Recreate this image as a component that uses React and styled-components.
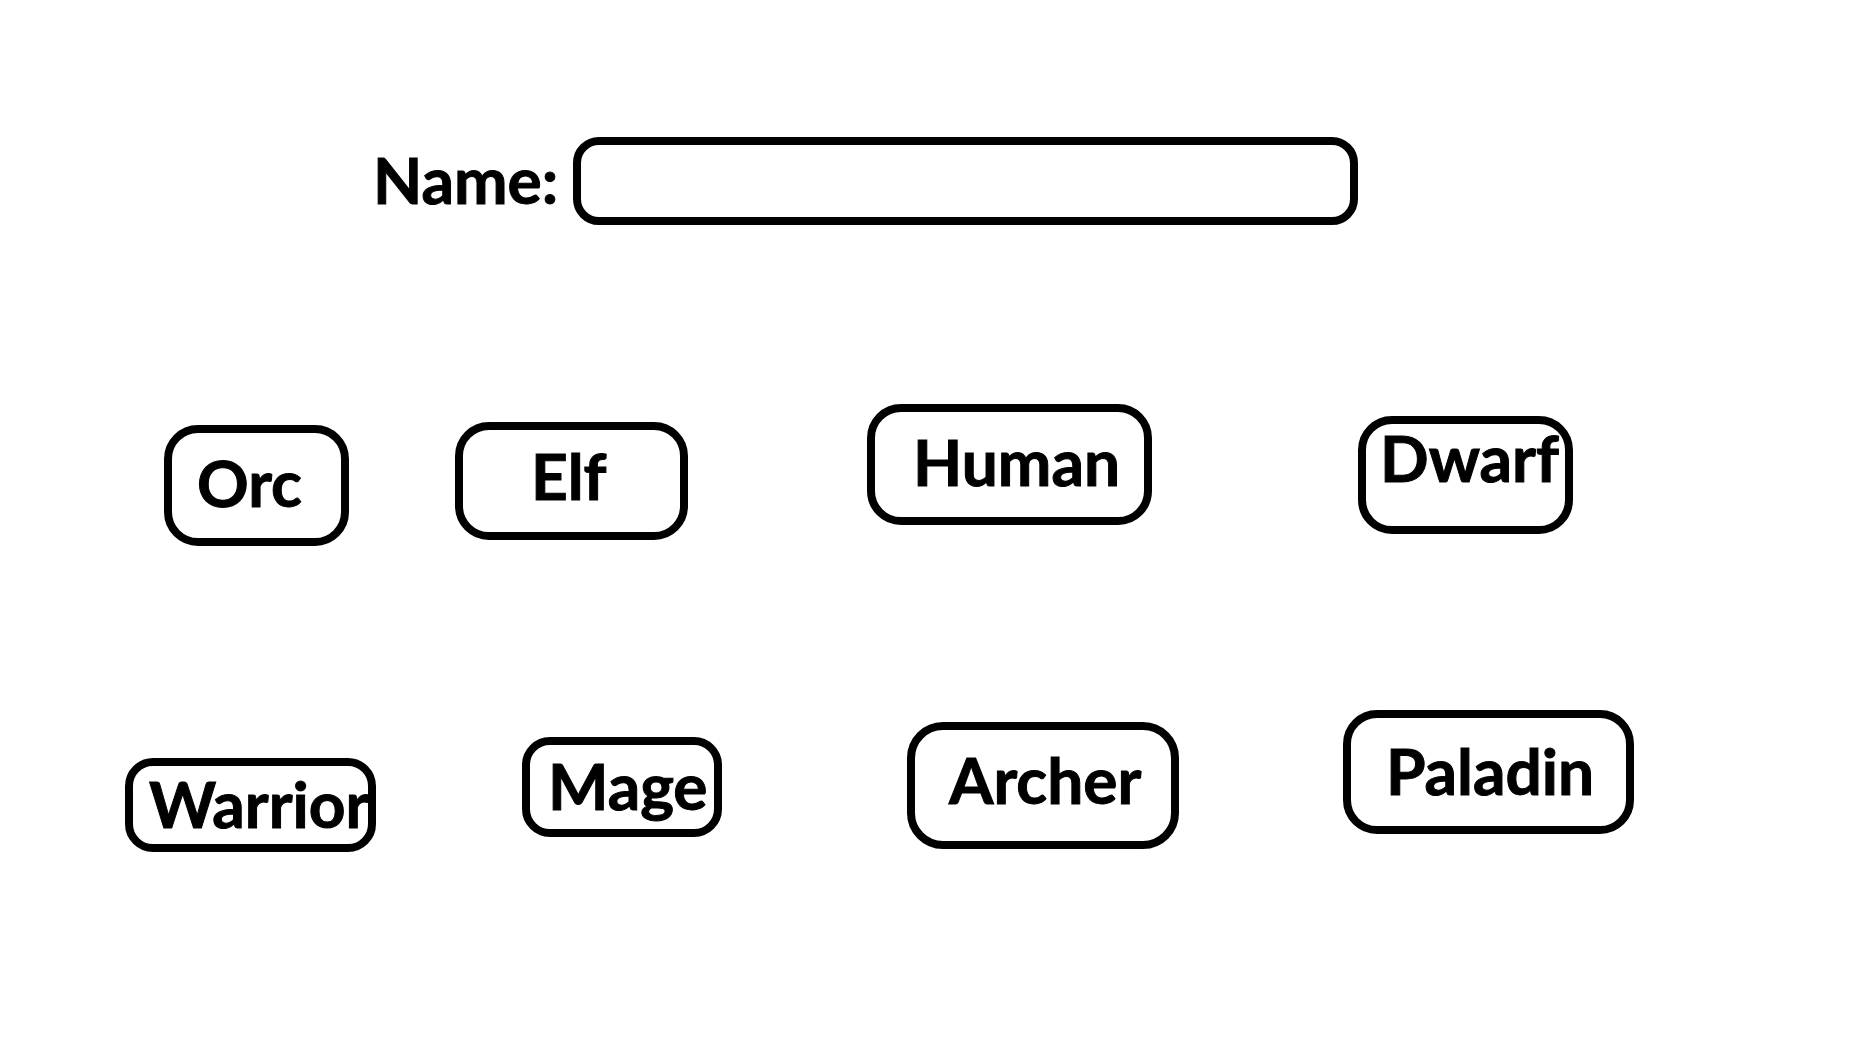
import React from "react";
import styled, { createGlobalStyle } from "styled-components";

const GlobalStyle = createGlobalStyle`
  *, *::before, *::after { box-sizing: border-box; }
  body {
    margin: 0;
    background: #fff;
    color: #000;
    font-family: Lato, "Liberation Sans", sans-serif;
    font-size: 64px;
    font-weight: 700;
    line-height: 66px;
    -webkit-text-stroke: 1px #000;
  }
`;

const Page = styled.main`
  display: flex;
  flex-direction: column;
  gap: 164px;
  padding: 137px 0 64px;
`;

const NameField = styled.div`
  display: grid;
  grid-template-columns: 373fr 200fr 785fr 517fr;
  align-items: center;
  margin-bottom: 15px;
`;

const NameLabel = styled.label`
  grid-column: 2;
  padding-bottom: 2px;
  white-space: nowrap;
`;

const NameInput = styled.input`
  grid-column: 3;
  width: 100%;
  height: 88px;
  padding: 0 16px;
  border: 8px solid #000;
  border-radius: 26px;
  background: #fff;
  color: inherit;
  font: inherit;
  outline: none;
`;

const Choices = styled.div`
  display: grid;
  grid-template-columns: ${(p) => p.$columns};
  align-items: start;
`;

const Choice = styled.button`
  grid-column: ${(p) => p.$column};
  display: flex;
  align-items: flex-start;
  height: ${(p) => p.$height}px;
  min-width: 0;
  margin: ${(p) => p.$drop}px 0 0;
  padding: ${(p) => p.$top}px 0 0 ${(p) => p.$left}px;
  border: 8px solid #000;
  border-radius: ${(p) => p.$radius}px;
  background: #fff;
  color: inherit;
  font: inherit;
  white-space: nowrap;
  cursor: pointer;
`;

const races = {
  label: "Race",
  columns: "164fr 185fr 106fr 233fr 179fr 285fr 206fr 215fr 302fr",
  items: [
    { name: "Orc", height: 121, drop: 21, top: 17, left: 25, radius: 34 },
    { name: "Elf", height: 118, drop: 18, top: 13, left: 68, radius: 34 },
    { name: "Human", height: 121, drop: 0, top: 17, left: 38, radius: 34 },
    { name: "Dwarf", height: 118, drop: 12, top: 1, left: 14, radius: 34 },
  ],
};

const classes = {
  label: "Class",
  columns: "125fr 251fr 146fr 200fr 185fr 272fr 164fr 291fr 241fr",
  items: [
    { name: "Warrior", height: 94, drop: 48, top: 5, left: 16, radius: 28 },
    { name: "Mage", height: 100, drop: 27, top: 8, left: 18, radius: 28 },
    { name: "Archer", height: 127, drop: 12, top: 17, left: 34, radius: 36 },
    { name: "Paladin", height: 124, drop: 0, top: 20, left: 35, radius: 34 },
  ],
};

function ChoiceRow({ label, columns, items }) {
  return (
    <Choices role="group" aria-label={label} $columns={columns}>
      {items.map((item, i) => (
        <Choice
          key={item.name}
          type="button"
          $column={2 * (i + 1)}
          $height={item.height}
          $drop={item.drop}
          $top={item.top}
          $left={item.left}
          $radius={item.radius}
        >
          {item.name}
        </Choice>
      ))}
    </Choices>
  );
}

export default function App() {
  return (
    <>
      <GlobalStyle />
      <Page>
        <NameField>
          <NameLabel htmlFor="name">Name:</NameLabel>
          <NameInput id="name" type="text" />
        </NameField>
        <ChoiceRow {...races} />
        <ChoiceRow {...classes} />
      </Page>
    </>
  );
}
